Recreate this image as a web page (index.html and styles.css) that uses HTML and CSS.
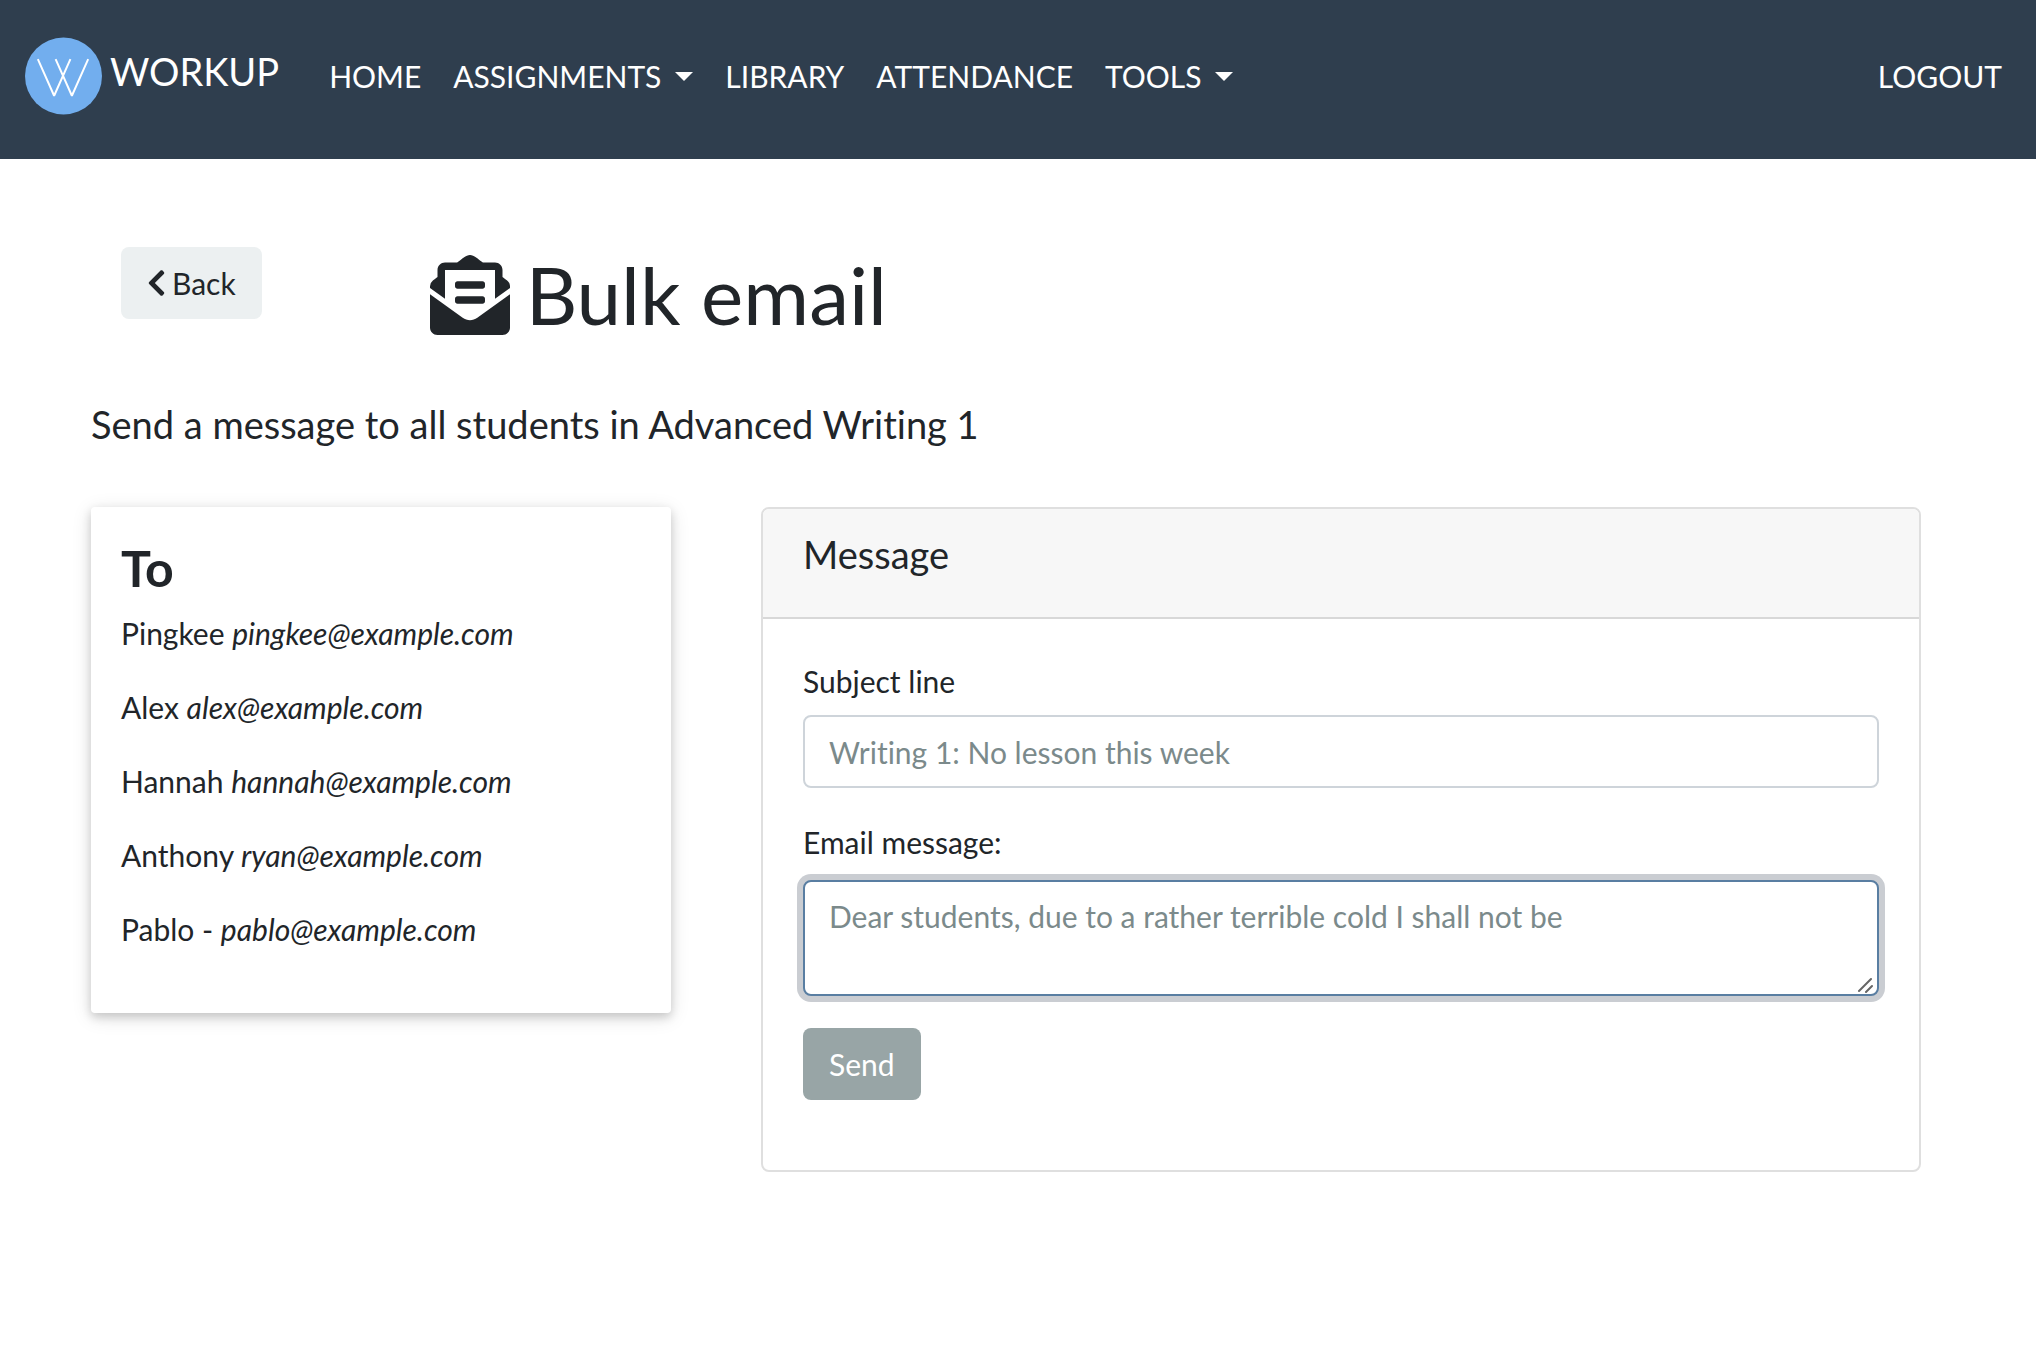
FILE: index.html
```html
<!DOCTYPE html>
<html lang="en">
<head>
<meta charset="utf-8">
<title>Bulk email - Workup</title>
<link rel="stylesheet" href="styles.css">
</head>
<body>
<nav class="navbar">
  <a class="brand" href="#">
    <svg class="brand-logo" viewBox="0 0 78 78" aria-hidden="true">
      <circle cx="39" cy="39" r="39" fill="#72aeee"/>
      <path d="M13 22 29.500 59 46 22M31 22 47.500 59 64 22" fill="none" stroke="#fff" stroke-width="2" stroke-linejoin="bevel"/>
    </svg>
    <span class="brand-name">WORKUP</span>
  </a>
  <ul class="nav-list">
    <li><a class="nav-link" href="#">HOME</a></li>
    <li><a class="nav-link dropdown" href="#">ASSIGNMENTS</a></li>
    <li><a class="nav-link" href="#">LIBRARY</a></li>
    <li><a class="nav-link" href="#">ATTENDANCE</a></li>
    <li><a class="nav-link dropdown" href="#">TOOLS</a></li>
  </ul>
  <a class="nav-link" href="#">LOGOUT</a>
</nav>
<main class="page">
  <header class="page-header">
    <button class="btn btn-light" type="button">
      <svg class="chevron" viewBox="0 0 320 512" aria-hidden="true"><path fill="currentColor" d="M34.52 239.03L228.87 44.69c9.37-9.37 24.57-9.37 33.94 0l22.67 22.67c9.36 9.36 9.37 24.52.04 33.9L131.49 256l154.02 154.75c9.34 9.38 9.32 24.54-.04 33.9l-22.67 22.67c-9.37 9.37-24.57 9.37-33.94 0L34.52 272.97c-9.37-9.37-9.37-24.57 0-33.94z"/></svg>
      Back
    </button>
    <h1 class="title"><svg class="title-icon" viewBox="0 0 512 512" aria-hidden="true"><path fill="currentColor" d="M176 216h160c8.84 0 16-7.16 16-16v-16c0-8.84-7.16-16-16-16H176c-8.84 0-16 7.16-16 16v16c0 8.84 7.16 16 16 16zm-16 80c0 8.84 7.16 16 16 16h160c8.84 0 16-7.16 16-16v-16c0-8.84-7.16-16-16-16H176c-8.84 0-16 7.16-16 16v16zm96 121.13c-16.42 0-32.84-5.06-46.86-15.19L0 250.86V464c0 26.51 21.49 48 48 48h416c26.51 0 48-21.49 48-48V250.86L302.86 401.94c-14.02 10.12-30.44 15.19-46.86 15.19zm237.61-254.18c-8.85-6.94-17.24-13.47-29.61-22.81V96c0-26.51-21.49-48-48-48h-77.55c-3.04-2.2-5.87-4.26-9.04-6.56C312.6 29.17 279.2-.35 256 0c-23.2-.35-56.59 29.17-73.41 41.44-3.17 2.3-6 4.36-9.04 6.56H96c-26.51 0-48 21.49-48 48v44.14c-12.37 9.33-20.76 15.87-29.61 22.81A47.995 47.995 0 0 0 0 200.72v10.65l96 69.35V96h320v184.72l96-69.35v-10.65c0-14.74-6.78-28.67-18.39-37.77z"/></svg>Bulk email</h1>
  </header>
  <p class="lead">Send a message to all students in Advanced Writing 1</p>
  <div class="columns">
    <section class="recipients">
      <h2 class="recipients-title">To</h2>
      <ul class="recipient-list">
        <li>Pingkee <em>pingkee@example.com</em></li>
        <li>Alex <em>alex@example.com</em></li>
        <li>Hannah <em>hannah@example.com</em></li>
        <li>Anthony <em>ryan@example.com</em></li>
        <li>Pablo - <em>pablo@example.com</em></li>
      </ul>
    </section>
    <section class="card">
      <h2 class="card-header">Message</h2>
      <form class="card-body">
        <label class="label" for="subject">Subject line</label>
        <input class="control" id="subject" type="text" placeholder="Writing 1: No lesson this week">
        <label class="label" for="message">Email message:</label>
        <div class="textarea-wrap">
          <textarea class="control control-active" id="message" placeholder="Dear students, due to a rather terrible cold I shall not be"></textarea>
          <svg class="grip" viewBox="0 0 16 16" aria-hidden="true"><path d="M2 14 14 2M9 15 15 9" fill="none" stroke="#666" stroke-width="2" stroke-linecap="round"/></svg>
        </div>
        <button class="btn btn-secondary" type="button">Send</button>
      </form>
    </section>
  </div>
</main>
</body>
</html>
```
FILE: styles.css
```css
* {
  box-sizing: border-box;
}

body {
  margin: 0;
  background: #fff;
  color: #212529;
  font-family: Lato, "Liberation Sans", sans-serif;
  font-size: 30px;
  font-variant-ligatures: none;
  line-height: 45px;
}

h1, h2, p, ul {
  margin: 0;
  padding: 0;
  font-weight: 400;
}

ul {
  list-style: none;
}

/* Navigation */
.navbar {
  display: flex;
  align-items: center;
  padding: 32px 18px 39px 25px;
  background: #2f3e4e;
}

.brand {
  display: flex;
  gap: 8px;
  margin-right: 34px;
  padding: 5px 0;
  color: #fff;
  font-size: 38px;
  line-height: 56px;
  text-decoration: none;
}

.brand-logo {
  width: 77px;
  height: 78px;
}

.brand-name {
  padding: 6px 0 16px;
}

.nav-list {
  display: flex;
  margin-right: auto;
}

.nav-link {
  padding: 16px;
  color: #fff;
  text-decoration: none;
}

.dropdown::after {
  content: "";
  display: inline-block;
  margin-left: 14px;
  border: 9px solid transparent;
  border-top-color: #fff;
  border-bottom: 0;
  vertical-align: 7px;
}

/* Page */
.page {
  padding: 88px 115px 88px 91px;
}

.page-header {
  display: flex;
  align-items: flex-start;
  gap: 168px;
  padding-left: 30px;
}

.title {
  font-size: 80px;
  line-height: 94px;
}

.title-icon {
  width: 80px;
  height: 80px;
  margin-right: 16px;
  vertical-align: -10px;
}

.lead {
  margin: 60px 0;
  font-size: 38px;
  line-height: 46px;
}

.columns {
  display: grid;
  grid-template-columns: 1fr 2fr;
  gap: 90px;
  align-items: start;
}

/* Buttons */
.btn {
  display: inline-flex;
  align-items: center;
  gap: 6px;
  padding: 12px 24px;
  border: 2px solid transparent;
  border-radius: 8px;
  font: inherit;
  line-height: 44px;
  cursor: pointer;
}

.btn-light {
  background: #ecf0f1;
  color: #212529;
}

.btn-secondary {
  background: #98a5a6;
  color: #fff;
}

.chevron {
  width: 19px;
  height: 30px;
}

/* Recipients */
.recipients {
  padding: 30px 30px 61px;
  border-radius: 4px;
  box-shadow: 0 4px 10px rgba(0, 0, 0, .16), 0 4px 20px rgba(0, 0, 0, .12);
}

.recipients-title {
  margin-bottom: 12px;
  font-size: 50px;
  font-weight: 700;
  line-height: 62px;
}

.recipient-list {
  display: grid;
  gap: 29px;
}

/* Message card */
.card {
  border: 2px solid #dfdfdf;
  border-radius: 8px;
}

.card-header {
  padding: 22px 40px 40px;
  border-bottom: 2px solid #d8d8d8;
  border-radius: 6px 6px 0 0;
  background: #f7f7f7;
  font-size: 38px;
  line-height: 46px;
}

.card-body {
  padding: 40px 40px 70px;
}

.label {
  display: block;
  margin-bottom: 11px;
}

.control {
  display: block;
  width: 100%;
  margin-bottom: 32px;
  padding: 12px 24px;
  border: 2px solid #ced4da;
  border-radius: 8px;
  background: #fff;
  color: #7b8a8b;
  font: inherit;
  font-variant-ligatures: none;
  line-height: 45px;
}

.control::placeholder {
  color: #7b8a8b;
  opacity: 1;
}

input.control {
  height: 73px;
}

textarea.control {
  height: 116px;
  resize: none;
}

.control-active,
.control:focus {
  border-color: #597ea2;
  outline: 0;
  box-shadow: 0 0 0 6px #cacdd2;
}

.textarea-wrap {
  position: relative;
  padding-top: 4px;
}

.grip {
  position: absolute;
  right: 6px;
  bottom: 3px;
  width: 16px;
  height: 16px;
}
```
